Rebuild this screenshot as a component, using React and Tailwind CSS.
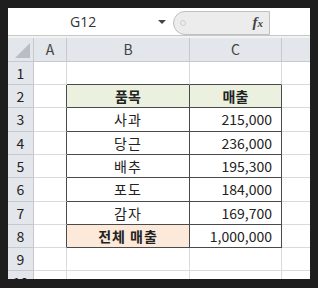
import React from "react";

const cols = ["A", "B", "C", ""];
const rowHeights = [23, 23, 24, 23, 23, 24, 23, 23, 23, 23];

const items = [
  ["사과", "215,000"],
  ["당근", "236,000"],
  ["배추", "195,300"],
  ["포도", "184,000"],
  ["감자", "169,700"],
];

const font = { fontFamily: '"Noto Sans CJK KR", "Noto Sans", sans-serif' };

function Cell({ className = "", children }) {
  return (
    <div className={"flex items-center text-[14px] text-[#222] " + className}>
      {children}
    </div>
  );
}

function bodyRow(r) {
  // r: 1-based row number
  const inTable = r >= 2 && r <= 8;
  const aCls = inTable ? "border-r border-b border-r-[#4a4a4a] border-b-[#dadada]" : "border-r border-b border-[#dadada]";
  let b = null;
  let c = null;
  let bCls = "border-r border-b border-[#dadada]";
  let cCls = "border-r border-b border-[#dadada]";
  if (r === 1) {
    bCls = "border-r border-b border-r-[#dadada] border-b-[#4a4a4a]";
    cCls = bCls;
  }
  if (inTable) {
    bCls = "border-r border-b border-[#4a4a4a] justify-center";
    cCls = "border-r border-b border-[#4a4a4a]";
    if (r === 2) {
      bCls += " bg-[#ebf1de] font-bold";
      cCls += " bg-[#ebf1de] font-bold justify-center";
      b = "품목";
      c = "매출";
    } else if (r === 8) {
      bCls += " bg-[#fde9d9] font-bold tracking-[1px]";
      cCls += " justify-end pr-[9px]";
      b = "전체 매출";
      c = "1,000,000";
    } else {
      const it = items[r - 3];
      bCls += " tracking-[1px]";
      cCls += " justify-end pr-[9px]";
      b = it[0];
      c = it[1];
    }
  }
  return [
    <Cell key={r + "h"} className="justify-center bg-[#e3e6ea] border-r border-b border-[#c5c9cf] text-[#4d5a6b]">
      {r}
    </Cell>,
    <Cell key={r + "a"} className={aCls} />,
    <Cell key={r + "b"} className={bCls}>{b}</Cell>,
    <Cell key={r + "c"} className={cCls}>{c}</Cell>,
    <Cell key={r + "d"} className="border-b border-[#dadada]" />,
  ];
}

export default function App() {
  return (
    <div className="w-[318px] h-[288px] bg-[#1e1e1e] pt-[8px] pl-[8px]" style={font}>
      <div className="w-[302px] h-[271px] overflow-hidden bg-white">
        {/* formula bar */}
        <div className="h-[28px] flex items-center border-b border-[#c8c8c8] bg-white">
          <div className="w-[158px] flex items-center">
            <span className="ml-[62px] text-[14px] text-[#333]" style={{ fontFamily: '"Open Sans", sans-serif' }}>
              G12
            </span>
            <span className="ml-auto w-0 h-0 border-l-[4px] border-r-[4px] border-t-[4px] border-l-transparent border-r-transparent border-t-[#444]" />
          </div>
          <div className="ml-[7px] mt-[2px] w-[97px] h-[24px] rounded-l-full border border-[#c0c0c0] bg-[#ececec] flex items-center">
            <span className="ml-[6px] w-[6px] h-[6px] rounded-full border border-[#cfcfcf]" />
            <span className="ml-auto mr-[6px] text-[15px] italic font-bold text-[#444]" style={{ fontFamily: '"Liberation Serif", serif' }}>
              f<span className="text-[11px]">x</span>
            </span>
          </div>
        </div>
        <div className="h-[2px] bg-[#f2f2f2]" />
        {/* sheet */}
        <div
          className="grid grid-cols-[26px_33px_123px_92px_28px]"
          style={{ gridTemplateRows: "24px " + rowHeights.map((h) => h + "px").join(" ") }}
        >
          <div className="relative bg-[#e3e6ea] border-r border-b border-[#c5c9cf]">
            <svg className="absolute left-[7px] top-[5px]" width="16" height="15" viewBox="0 0 16 15">
              <polygon points="15,0 15,15 0,15" fill="#b9bec5" />
            </svg>
          </div>
          {cols.map((c, i) => (
            <Cell
              key={"col" + i}
              className={"justify-center bg-[#e3e6ea] border-b border-[#c5c9cf] text-[#444] " + (i < 3 ? "border-r" : "")}
            >
              {c}
            </Cell>
          ))}
          {rowHeights.map((_, i) => bodyRow(i + 1))}
        </div>
      </div>
    </div>
  );
}
